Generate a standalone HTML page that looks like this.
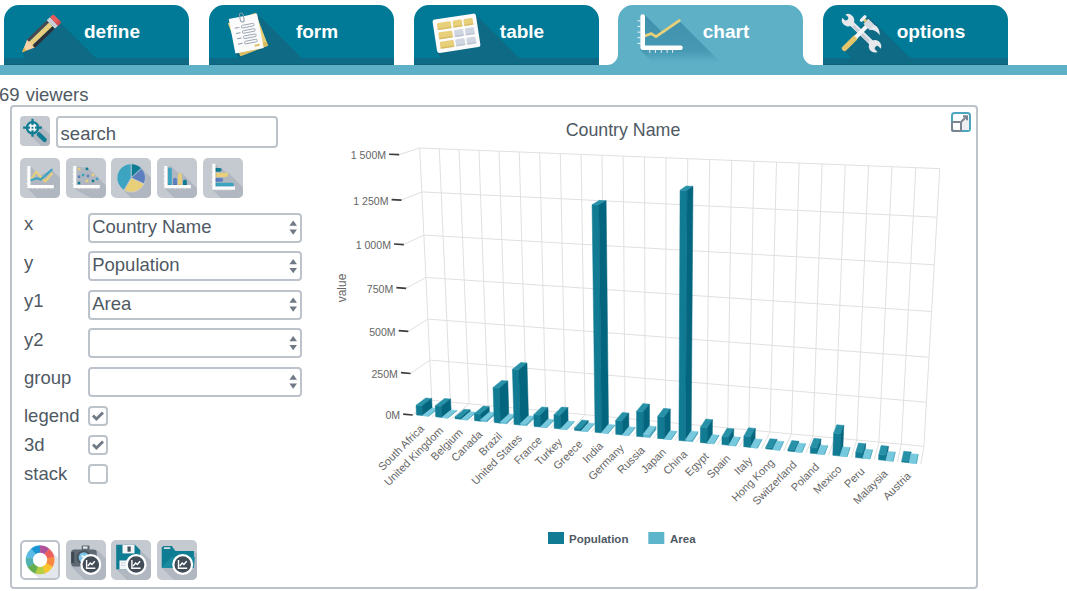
<!DOCTYPE html>
<html><head><meta charset="utf-8">
<style>
*{box-sizing:border-box;margin:0;padding:0}
html,body{width:1067px;height:591px;overflow:hidden;background:#fff;font-family:"Liberation Sans",sans-serif;color:#4f5964}
.abs{position:absolute}
.tab{position:absolute;top:5px;width:185px;height:60px;background:#037893;border-radius:15px 15px 0 0;overflow:hidden}
.tab .band{position:absolute;left:0;right:0;top:53px;height:7px;background:#0e6580}
.tab .lbl{position:absolute;top:13px;left:0;width:216px;text-align:center;color:#fff;font-weight:bold;font-size:18px;line-height:24px}
.tab svg{position:absolute;left:0;top:0}
.tab.active{background:#5fb0c6;overflow:visible}
.bar{position:absolute;left:0;top:65px;width:1067px;height:10px;background:#5fb0c6}
.viewers{position:absolute;left:-1px;top:85px;font-size:18.5px;line-height:20px;word-spacing:1px}
.panel{position:absolute;left:9.5px;top:105px;width:968px;height:483.5px;border:2px solid #bcc3cb;border-radius:4px}
.btn{position:absolute;width:40px;height:40px;border-radius:5px;background:#c5cad1;overflow:hidden}
.btn svg{position:absolute;left:0;top:0}
.inp{position:absolute;border:2px solid #bcc3cb;border-radius:4px;background:#fff;font-size:18.5px;color:#4f5964}
.lab{position:absolute;left:24px;font-size:18.5px;line-height:20px}
.sel{position:absolute;left:88px;width:214px;height:30px;border:2px solid #bcc3cb;border-radius:4px;font-size:18.5px;line-height:23px;padding-left:2.2px}
.sel:after{content:"";position:absolute}
.arr{position:absolute;right:3px;top:6px}
.cb{position:absolute;left:88px;width:20px;height:20px;border:2px solid #bcc3cb;border-radius:4px}
.yl{font-size:10.6px;fill:#666}
.xl{font-size:11px;fill:#666}
</style></head><body>
<svg class="abs" style="left:0;top:0" width="1067" height="80">
<defs>
<linearGradient id="chsh" x1="0" y1="15" x2="0" y2="62" gradientUnits="userSpaceOnUse"><stop offset="0" stop-color="#3e90ac"/><stop offset="0.75" stop-color="#4798b3"/><stop offset="1" stop-color="#5cafc6"/></linearGradient>
<clipPath id="tc0"><path d="M4,65 V20 A15,15 0 0 1 19,5 H174 A15,15 0 0 1 189,20 V65Z"/></clipPath>
<clipPath id="tc1"><path d="M209,65 V20 A15,15 0 0 1 224,5 H379 A15,15 0 0 1 394,20 V65Z"/></clipPath>
<clipPath id="tc2"><path d="M414,65 V20 A15,15 0 0 1 429,5 H584 A15,15 0 0 1 599,20 V65Z"/></clipPath>
<clipPath id="tc3"><path d="M618,65 V20 A15,15 0 0 1 633,5 H788 A15,15 0 0 1 803,20 V65Z"/></clipPath>
<clipPath id="tc4"><path d="M823,65 V20 A15,15 0 0 1 838,5 H993 A15,15 0 0 1 1008,20 V65Z"/></clipPath>
</defs>
<rect x="0" y="65" width="1067" height="10" fill="#5eb0c7"/>
<path d="M4,65 V20 A15,15 0 0 1 19,5 H174 A15,15 0 0 1 189,20 V65Z" fill="#007a96"/>
<rect x="4" y="58" width="185" height="7" fill="#0f6a85"/>
<g clip-path="url(#tc0)"><polygon points="22,52 60.7,22.8 103,65 29,65" fill="#0f6a85"/></g>
<rect x="4" y="64" width="185" height="1" fill="#0d627e"/>
<path d="M209,65 V20 A15,15 0 0 1 224,5 H379 A15,15 0 0 1 394,20 V65Z" fill="#007a96"/>
<rect x="209" y="58" width="185" height="7" fill="#0f6a85"/>
<g clip-path="url(#tc1)"><polygon points="257.1,13.6 308.5,65 246.5,65 235.2,53.7" fill="#0f6a85"/></g>
<rect x="209" y="64" width="185" height="1" fill="#0d627e"/>
<path d="M414,65 V20 A15,15 0 0 1 429,5 H584 A15,15 0 0 1 599,20 V65Z" fill="#007a96"/>
<rect x="414" y="58" width="185" height="7" fill="#0f6a85"/>
<g clip-path="url(#tc2)"><polygon points="475.8,14.5 526.3,65 448.5,65 437.2,53.7" fill="#0f6a85"/></g>
<rect x="414" y="64" width="185" height="1" fill="#0d627e"/>
<path d="M607,65 A11,11 0 0 0 618,54 V20 A15,15 0 0 1 633,5 H788 A15,15 0 0 1 803,20 V54 A11,11 0 0 0 814,65Z" fill="#5eb0c7"/>
<g clip-path="url(#tc3)"><polygon points="645,15 663.5,33.5 679,20.7 723.3,65 655,65 640,50" fill="url(#chsh)"/></g>
<path d="M823,65 V20 A15,15 0 0 1 838,5 H993 A15,15 0 0 1 1008,20 V65Z" fill="#007a96"/>
<rect x="823" y="58" width="185" height="7" fill="#0f6a85"/>
<g clip-path="url(#tc4)"><polygon points="868.5,16.2 917.3,65 858.4,65 843.1,49.7" fill="#0f6a85"/></g>
<rect x="823" y="64" width="185" height="1" fill="#0d627e"/>
<g transform="translate(22.1 52.2) rotate(-44)"><polygon points="0,0 13,-5.8 13,5.8" fill="#f6d3a6"/><polygon points="0,0 4.5,-2 4.5,2" fill="#d9b447"/><rect x="12" y="-5.8" width="28" height="3.2" fill="#474c54"/><rect x="12" y="-2.6" width="28" height="5" fill="#e8cf7d"/><rect x="12" y="2.4" width="28" height="3.4" fill="#2d3137"/><path d="M12,-5.8 Q10,-3 13,-1 Q10,1 13,3 Q10,4.5 12.5,5.8 L12,5.8Z" fill="#f6d3a6"/><rect x="40" y="-5.8" width="4.2" height="11.6" fill="#dfe2e7"/><rect x="41" y="-5.8" width="0.8" height="11.6" fill="#b9bec6"/><rect x="42.6" y="-5.8" width="0.8" height="11.6" fill="#b9bec6"/><path d="M44.2,-5.8 L47,-5.8 Q49,-5.8 49,-3.5 L49,3.5 Q49,5.8 47,5.8 L44.2,5.8Z" fill="#e95a5b"/><rect x="44.2" y="2.6" width="4.8" height="3.2" fill="#cf4b4d" opacity=".7"/></g>
<g transform="translate(248 34.45) rotate(-21)"><rect x="-14.8" y="-17.6" width="29.6" height="35.3" fill="#e8cf7a"/><rect x="-14.8" y="13" width="29.6" height="4.3" fill="#d9bc5f"/></g>
<g transform="translate(246.2 33.5) rotate(-11)"><rect x="-14.4" y="-17.5" width="28.8" height="35" fill="#fbfbfc"/><g fill="none" stroke="#8e98a8" stroke-width="0.8"><rect x="-3.5" y="-8.7" width="13" height="2.6" rx="1.3"/><rect x="-3.5" y="-3.3" width="13" height="2.6" rx="1.3"/><rect x="-3.5" y="2.1" width="13" height="2.6" rx="1.3"/><rect x="-3.5" y="7.5" width="13" height="2.6" rx="1.3"/><path d="M-10,-7.3h4.5M-10,-1.9h4.5M-10,3.5h4.5M-10,8.9h4.5" stroke-width="1"/></g><rect x="6" y="12.5" width="5" height="2.2" fill="#e0c262"/><rect x="-3.2" y="-21" width="3.8" height="9" rx="1.9" fill="none" stroke="#8e98a8" stroke-width="1"/></g>
<g transform="translate(456.5 33.3) rotate(-8.7)"><rect x="-21.9" y="-16.9" width="43.8" height="33.8" rx="2.5" fill="#fbfbfc"/><rect x="-18" y="-13" width="14" height="7" rx="1.4" fill="#e8cf7a"/><rect x="-18" y="-7.4" width="14" height="1.4" fill="#c9ad55" opacity=".6"/><rect x="-2.2" y="-13" width="9.3" height="7" rx="1.4" fill="#e8cf7a"/><rect x="-2.2" y="-7.4" width="9.3" height="1.4" fill="#c9ad55" opacity=".6"/><rect x="8.8" y="-13" width="9.3" height="7" rx="1.4" fill="#e8cf7a"/><rect x="8.8" y="-7.4" width="9.3" height="1.4" fill="#c9ad55" opacity=".6"/><rect x="-18" y="-3.5" width="14" height="7" rx="1.4" fill="#e8cf7a"/><rect x="-18" y="2.0999999999999996" width="14" height="1.4" fill="#c9ad55" opacity=".6"/><rect x="-2.2" y="-3.5" width="9.3" height="7" rx="1.4" fill="#cfd6e1"/><rect x="-2.2" y="2.0999999999999996" width="9.3" height="1.4" fill="#aeb7c5" opacity=".6"/><rect x="8.8" y="-3.5" width="9.3" height="7" rx="1.4" fill="#cfd6e1"/><rect x="8.8" y="2.0999999999999996" width="9.3" height="1.4" fill="#aeb7c5" opacity=".6"/><rect x="-18" y="6" width="14" height="7" rx="1.4" fill="#e8cf7a"/><rect x="-18" y="11.6" width="14" height="1.4" fill="#c9ad55" opacity=".6"/><rect x="-2.2" y="6" width="9.3" height="7" rx="1.4" fill="#cfd6e1"/><rect x="-2.2" y="11.6" width="9.3" height="1.4" fill="#aeb7c5" opacity=".6"/><rect x="8.8" y="6" width="9.3" height="7" rx="1.4" fill="#cfd6e1"/><rect x="8.8" y="11.6" width="9.3" height="1.4" fill="#aeb7c5" opacity=".6"/></g>
<polyline points="643,36.5 651.3,33.6 656,36.6 679.3,20.6" fill="none" stroke="#e8cf7a" stroke-width="2.8" stroke-linejoin="round" stroke-linecap="round"/>
<path d="M642.7,16.5V47.8H680.5" fill="none" stroke="#fff" stroke-width="4.6" stroke-linecap="round" stroke-linejoin="round"/>
<path d="M637.5,20.8h3M637.5,26.4h3M637.5,32.1h3M637.5,37.7h3M637.5,43.4h3M649.8,50v2.8M655.4,50v2.8M661.3,50v2.8M667.1,50v2.8M672.6,50v2.8" stroke="#fff" stroke-width="1" opacity=".9"/>
<g transform="translate(861.5 33.2) rotate(44)"><rect x="-14" y="-2.6" width="28" height="5.2" fill="#e3e6ea"/><rect x="-11" y="-0.6" width="22" height="2.4" rx="1" fill="#c8cdd5"/><path d="M-24.6,-2.3 A6.3,6.3 0 1 1 -24.6,2.3 L-20.5,2.3 Q-18.3,0 -20.5,-2.3Z" fill="#e6e8ec"/><path d="M24.6,-2.3 A6.3,6.3 0 1 0 24.6,2.3 L20.5,2.3 Q18.3,0 20.5,-2.3Z" fill="#e6e8ec"/></g>
<g transform="translate(843 50) rotate(-45)"><rect x="-0.5" y="-2.7" width="20" height="5.4" rx="2.7" fill="#e3c56b"/><rect x="18" y="-2" width="17" height="4" fill="#f5f6f8"/><path d="M33,-4.2 H40 V5 H33Z" fill="#d5dae1"/><rect x="35" y="-7" width="3" height="3" fill="#e3c56b"/><rect x="32.5" y="-9.6" width="8" height="3.2" rx="1.4" fill="#eceef1"/><path d="M40,4.5 Q42,10 36.5,15.5 Q37.5,9 33,4.5Z" fill="#e6e9ed"/></g>
<text x="112" y="37.8" text-anchor="middle" font-size="19" font-weight="bold" fill="#fff">define</text>
<text x="317" y="37.8" text-anchor="middle" font-size="19" font-weight="bold" fill="#fff">form</text>
<text x="522" y="37.8" text-anchor="middle" font-size="19" font-weight="bold" fill="#fff">table</text>
<text x="726" y="37.8" text-anchor="middle" font-size="19" font-weight="bold" fill="#fff">chart</text>
<text x="931" y="37.8" text-anchor="middle" font-size="19" font-weight="bold" fill="#fff">options</text>
</svg>
<div class="viewers">69 viewers</div>
<div class="panel"></div>
<div class="inp" style="left:56px;top:116px;width:222px;height:32px;padding:5px 0 0 2.6px">search</div>
<div class="lab" style="top:214px">x</div>
<div class="lab" style="top:253px">y</div>
<div class="lab" style="top:291px">y1</div>
<div class="lab" style="top:330px">y2</div>
<div class="lab" style="top:368px">group</div>
<div class="lab" style="top:406px">legend</div>
<div class="lab" style="top:435px">3d</div>
<div class="lab" style="top:464px">stack</div>
<div class="sel" style="top:213px">Country Name</div>
<div class="sel" style="top:251px">Population</div>
<div class="sel" style="top:290px">Area</div>
<div class="sel" style="top:328px"></div>
<div class="sel" style="top:367px"></div>
<div class="cb" style="top:406px"></div>
<div class="cb" style="top:435px"></div>
<div class="cb" style="top:464px"></div>
<div class="cb" style="left:20px;top:540px;width:40px;height:40px;border-radius:5px"></div>
<svg class="abs" style="left:0;top:0" width="1067" height="591">
<defs>
<clipPath id="cs"><rect x="20" y="116" width="30" height="30" rx="4"/></clipPath>
<clipPath id="ct0"><rect x="20" y="158" width="40" height="40" rx="5"/></clipPath>
<clipPath id="ct1"><rect x="66" y="158" width="40" height="40" rx="5"/></clipPath>
<clipPath id="ct2"><rect x="111" y="158" width="40" height="40" rx="5"/></clipPath>
<clipPath id="ct3"><rect x="157" y="158" width="40" height="40" rx="5"/></clipPath>
<clipPath id="ct4"><rect x="203" y="158" width="40" height="40" rx="5"/></clipPath>
<clipPath id="cb0"><rect x="20" y="540" width="40" height="40" rx="5"/></clipPath>
<clipPath id="cb1"><rect x="66" y="540" width="40" height="40" rx="5"/></clipPath>
<clipPath id="cb2"><rect x="111" y="540" width="40" height="40" rx="5"/></clipPath>
<clipPath id="cb3"><rect x="157" y="540" width="40" height="40" rx="5"/></clipPath>
<clipPath id="cb0i"><rect x="22" y="542" width="36" height="36" rx="4"/></clipPath>
</defs>
<rect x="20" y="116" width="30" height="30" rx="4" fill="#c5cad1"/>
<g clip-path="url(#cs)"><polygon points="27,132 37,122 60,145 50,155" fill="#b1b7c0"/></g>
<circle cx="32.5" cy="127.7" r="5.6" fill="#f2f3f4" stroke="#0e7c93" stroke-width="2.3"/>
<path d="M23.1,127.7h6.8M35.1,127.7h6.8M32.5,118.7v6.4M32.5,130.3v6.4" stroke="#0e7c93" stroke-width="2.2"/>
<rect x="31.6" y="126.8" width="1.8" height="1.8" fill="#0e7c93"/>
<path d="M38.9,134.4L44.6,139.9" stroke="#0e7c93" stroke-width="4.4" stroke-linecap="round"/>
<rect x="20" y="158" width="40" height="40" rx="5" fill="#c5cad1"/>
<rect x="66" y="158" width="40" height="40" rx="5" fill="#c5cad1"/>
<rect x="111" y="158" width="40" height="40" rx="5" fill="#c5cad1"/>
<rect x="157" y="158" width="40" height="40" rx="5" fill="#c5cad1"/>
<rect x="203" y="158" width="40" height="40" rx="5" fill="#c5cad1"/>
<g clip-path="url(#ct0)"><polygon points="30.6,166.5 39.7,175.6 51.7,169.7 53.5,171.5 83,201 40,201 27.3,188.3" fill="#b1b7c0"/></g>
<polyline points="30.7,180.2 36,171.7 45.2,181.5 52.4,173" fill="none" stroke="#e8cf7a" stroke-width="2.1" stroke-linejoin="round"/>
<polyline points="30.7,180.2 36.7,178.2 40.6,179.6 51.7,169.7" fill="none" stroke="#3ca4c0" stroke-width="2.1" stroke-linejoin="round" stroke-linecap="round"/>
<path d="M28.900000000000002,166.1V186.6H53.8" fill="none" stroke="#fdfdfd" stroke-width="3.1"/><path d="M26.1,170h1M26.1,174.5h1M26.1,179h1M26.1,183.5h1M33,188.4v1M37.5,188.4v1M42,188.4v1M46.5,188.4v1M51,188.4v1" stroke="#fdfdfd" stroke-width=".7" opacity=".75"/>
<g clip-path="url(#ct1)"><polygon points="76.6,166.5 88.2,167.7 112,191.5 100,203 73.2,188.3" fill="#b1b7c0"/></g>
<path d="M88.5,167L112,190.5" stroke="#c0c5cc" stroke-width="0.8" opacity=".0"/>
<path d="M74.8,166.1V186.6H99.8" fill="none" stroke="#fdfdfd" stroke-width="3.1"/><path d="M72.0,170h1M72.0,174.5h1M72.0,179h1M72.0,183.5h1M79,188.4v1M83.5,188.4v1M88,188.4v1M92.5,188.4v1M97,188.4v1" stroke="#fdfdfd" stroke-width=".7" opacity=".75"/>
<rect x="77.85" y="167.85" width="2.5" height="2.5" fill="#e8cf7a"/>
<rect x="85.75" y="167.65" width="2.5" height="2.5" fill="#0e7c93"/>
<rect x="81.85" y="173.75" width="2.5" height="2.5" fill="#3ca4c0"/>
<rect x="77.75" y="175.45" width="2.5" height="2.5" fill="#5b7fbf"/>
<rect x="86.75" y="174.75" width="2.5" height="2.5" fill="#5b7fbf"/>
<rect x="91.75" y="173.75" width="2.5" height="2.5" fill="#e8cf7a"/>
<rect x="85.75" y="179.65" width="2.5" height="2.5" fill="#e8cf7a"/>
<rect x="91.75" y="179.65" width="2.5" height="2.5" fill="#0e7c93"/>
<rect x="95.85" y="177.65" width="2.5" height="2.5" fill="#3ca4c0"/>
<rect x="77.75" y="181.75" width="2.5" height="2.5" fill="#0e7c93"/>
<g clip-path="url(#ct2)"><polygon points="141.14,167.86 175,201.7 155,221.7 121.06,187.94" fill="#b1b7c0"/></g>
<path d="M131.1,177.9L131.10,163.70A14.2,14.2 0 0 1 141.57,168.31Z" fill="#0e7c93" stroke="#c9ced5" stroke-width=".7"/>
<path d="M131.1,177.9L141.57,168.31A14.2,14.2 0 0 1 143.97,183.90Z" fill="#5b7fbf" stroke="#c9ced5" stroke-width=".7"/>
<path d="M131.1,177.9L143.97,183.90A14.2,14.2 0 0 1 124.00,190.20Z" fill="#e8cf7a" stroke="#c9ced5" stroke-width=".7"/>
<path d="M131.1,177.9L124.00,190.20A14.2,14.2 0 0 1 131.10,163.70Z" fill="#3ca4c0" stroke="#c9ced5" stroke-width=".7"/>
<g clip-path="url(#ct3)"><polygon points="167.2,166.5 171.8,166.5 178,172.7 181.9,172.9 215,206 185,208 164.2,188" fill="#b1b7c0"/></g>
<path d="M168,185.5V169.1Q168,167.4 169.90,167.4 Q171.8,167.4 171.8,169.1V185.5Z" fill="#3ca4c0"/>
<rect x="168" y="184.3" width="3.8" height="1.2" fill="#000" opacity=".13"/>
<path d="M173.1,185.5V179.5Q173.1,177.8 175.00,177.8 Q176.9,177.8 176.9,179.5V185.5Z" fill="#5b7fbf"/>
<rect x="173.1" y="184.3" width="3.8" height="1.2" fill="#000" opacity=".13"/>
<path d="M178,185.5V174.6Q178,172.9 179.95,172.9 Q181.9,172.9 181.9,174.6V185.5Z" fill="#e8cf7a"/>
<rect x="178" y="184.3" width="3.9" height="1.2" fill="#000" opacity=".13"/>
<path d="M183,185.5V181.29999999999998Q183,179.6 184.90,179.6 Q186.8,179.6 186.8,181.29999999999998V185.5Z" fill="#0e7c93"/>
<rect x="183" y="184.3" width="3.8" height="1.2" fill="#000" opacity=".13"/>
<path d="M165.79999999999998,166.1V186.6H190.8" fill="none" stroke="#fdfdfd" stroke-width="3.1"/><path d="M163.0,170h1M163.0,174.5h1M163.0,179h1M163.0,183.5h1M170,188.4v1M175,188.4v1M180,188.4v1M185,188.4v1" stroke="#fdfdfd" stroke-width=".7" opacity=".75"/>
<g clip-path="url(#ct4)"><polygon points="215.3,164 219.2,167.9 221.6,167.9 226.5,172.8 228.3,172.8 262,206.5 232,209.5 212.3,189.5" fill="#b1b7c0"/></g>
<path d="M215.3,167.9H219.80Q221.6,167.9 221.6,169.85 Q221.6,171.8 219.80,171.8H215.3Z" fill="#0e7c93"/>
<rect x="215.3" y="167.9" width="1.2" height="3.9" fill="#000" opacity=".13"/>
<path d="M215.3,172.8H226.50Q228.3,172.8 228.3,174.85 Q228.3,176.9 226.50,176.9H215.3Z" fill="#e8cf7a"/>
<rect x="215.3" y="172.8" width="1.2" height="4.1" fill="#000" opacity=".13"/>
<path d="M215.3,178H221.30Q223.1,178 223.1,179.85 Q223.1,181.7 221.30,181.7H215.3Z" fill="#5b7fbf"/>
<rect x="215.3" y="178" width="1.2" height="3.7" fill="#000" opacity=".13"/>
<path d="M215.3,182.8H232.10Q233.9,182.8 233.9,184.75 Q233.9,186.7 232.10,186.7H215.3Z" fill="#3ca4c0"/>
<rect x="215.3" y="182.8" width="1.2" height="3.9" fill="#000" opacity=".13"/>
<path d="M213.9,163.8V188.1H235" fill="none" stroke="#fdfdfd" stroke-width="3.1"/><path d="M211.10000000000002,169.4h1M211.10000000000002,174.3h1M211.10000000000002,179.5h1M211.10000000000002,184.3h1M216.8,189.9v1M220.1,189.9v1M223.8,189.9v1M227.2,189.9v1M230.6,189.9v1" stroke="#fdfdfd" stroke-width=".7" opacity=".75"/>
<path d="M289.4,225.8L293.2,220.6L297,225.8ZM289.4,229.5L293.2,234.7L297,229.5Z" fill="#6f7a86"/>
<path d="M289.4,264.3L293.2,259.1L297,264.3ZM289.4,268.0L293.2,273.2L297,268.0Z" fill="#6f7a86"/>
<path d="M289.4,302.8L293.2,297.6L297,302.8ZM289.4,306.5L293.2,311.7L297,306.5Z" fill="#6f7a86"/>
<path d="M289.4,341.3L293.2,336.1L297,341.3ZM289.4,345.0L293.2,350.2L297,345.0Z" fill="#6f7a86"/>
<path d="M289.4,379.8L293.2,374.6L297,379.8ZM289.4,383.5L293.2,388.7L297,383.5Z" fill="#6f7a86"/>
<path d="M93,415.6L96.4,419L103,412.4" fill="none" stroke="#6f7a86" stroke-width="2.8"/>
<path d="M93,444.6L96.4,448L103,441.4" fill="none" stroke="#6f7a86" stroke-width="2.8"/>
<g clip-path="url(#cb0i)"><polygon points="50.1,549.8 90,589.7 70,609.7 30.1,569.8" fill="#e3e6ea"/></g>
<path d="M30.97,548.92A14.2,14.2 0 0 1 40.10,545.60L40.10,552.70A7.1,7.1 0 0 0 35.54,554.36Z" fill="#1a96d4" stroke="#1a96d4" stroke-width=".4"/>
<path d="M40.10,545.60A14.2,14.2 0 0 1 49.23,548.92L44.66,554.36A7.1,7.1 0 0 0 40.10,552.70Z" fill="#b1519c" stroke="#b1519c" stroke-width=".4"/>
<path d="M49.23,548.92A14.2,14.2 0 0 1 54.08,557.33L47.09,558.57A7.1,7.1 0 0 0 44.66,554.36Z" fill="#ee5f5c" stroke="#ee5f5c" stroke-width=".4"/>
<path d="M54.08,557.33A14.2,14.2 0 0 1 52.40,566.90L46.25,563.35A7.1,7.1 0 0 0 47.09,558.57Z" fill="#f7883e" stroke="#f7883e" stroke-width=".4"/>
<path d="M52.40,566.90A14.2,14.2 0 0 1 44.96,573.14L42.53,566.47A7.1,7.1 0 0 0 46.25,563.35Z" fill="#fcc52d" stroke="#fcc52d" stroke-width=".4"/>
<path d="M44.96,573.14A14.2,14.2 0 0 1 35.24,573.14L37.67,566.47A7.1,7.1 0 0 0 42.53,566.47Z" fill="#b6cf43" stroke="#b6cf43" stroke-width=".4"/>
<path d="M35.24,573.14A14.2,14.2 0 0 1 27.80,566.90L33.95,563.35A7.1,7.1 0 0 0 37.67,566.47Z" fill="#63ae4d" stroke="#63ae4d" stroke-width=".4"/>
<path d="M27.80,566.90A14.2,14.2 0 0 1 26.12,557.33L33.11,558.57A7.1,7.1 0 0 0 33.95,563.35Z" fill="#4fb1b0" stroke="#4fb1b0" stroke-width=".4"/>
<path d="M26.12,557.33A14.2,14.2 0 0 1 30.97,548.92L35.54,554.36A7.1,7.1 0 0 0 33.11,558.57Z" fill="#5bbbe5" stroke="#5bbbe5" stroke-width=".4"/>
<circle cx="40.1" cy="559.8" r="7.1" fill="#fff"/>
<rect x="66" y="540" width="40" height="40" rx="5" fill="#c5cad1"/>
<g clip-path="url(#cb1)"><polygon points="96.7,549.4 136.7,589.4 111.2,606.5 71.2,566.5" fill="#b1b7c0"/></g>
<rect x="111" y="540" width="40" height="40" rx="5" fill="#c5cad1"/>
<g clip-path="url(#cb2)"><polygon points="140.2,550 180.2,590 156.2,609.2 116.2,569.2" fill="#b1b7c0"/></g>
<rect x="157" y="540" width="40" height="40" rx="5" fill="#c5cad1"/>
<g clip-path="url(#cb3)"><polygon points="193.9,551 233.9,591 201.7,607.8 161.7,567.8" fill="#b1b7c0"/></g>
<rect x="71.2" y="549.4" width="25.5" height="17" rx="3" fill="#5d6873"/>
<rect x="81.7" y="545.5" width="7.8" height="5" rx="1" fill="#5d6873"/>
<rect x="83" y="546.5" width="4.5" height="2.2" fill="#e8eaed"/>
<rect x="71.2" y="552" width="3" height="11" fill="#3f4953"/>
<circle cx="83.8" cy="557.5" r="7" fill="#46515b"/>
<circle cx="83.8" cy="557.5" r="5.2" fill="#7cc3e6"/>
<circle cx="82.6" cy="556.3" r="1.3" fill="#d8eef8"/>
<path d="M116.2,544.8H135L140.2,550V569.2H116.2Z" fill="#0e7c93"/>
<rect x="122.5" y="544.8" width="12" height="8.6" fill="#f4f5f6"/>
<rect x="127.5" y="546.5" width="3.2" height="5.2" fill="#46515b"/>
<rect x="119.5" y="560.5" width="17" height="8.7" fill="#f4f5f6"/>
<path d="M121,563h6M121,565.5h6" stroke="#c9ced5" stroke-width=".8"/>
<path d="M161.7,547V567.8H193.9V551H175.5L173,547.8Z" fill="#0e7c93"/>
<rect x="162.6" y="546" width="10" height="3" rx="1" fill="#0e7c93"/>
<rect x="163.8" y="547.3" width="6.5" height="1.6" fill="#e8eaed"/>
<path d="M161.7,567.8L171,557H195L193.9,567.8Z" fill="#1a8aa0"/>
<circle cx="90.8" cy="564.5" r="9.4" fill="#414c57" stroke="#fff" stroke-width="2.2"/>
<path d="M86.6,560.0V568.3H95.3" fill="none" stroke="#fff" stroke-width="1.4"/>
<polyline points="87.8,566.0 90.3,563.0 92.0,564.5 94.8,561.3" fill="none" stroke="#fff" stroke-width="1.4"/>
<circle cx="136.1" cy="564.5" r="9.4" fill="#414c57" stroke="#fff" stroke-width="2.2"/>
<path d="M131.9,560.0V568.3H140.6" fill="none" stroke="#fff" stroke-width="1.4"/>
<polyline points="133.1,566.0 135.6,563.0 137.29999999999998,564.5 140.1,561.3" fill="none" stroke="#fff" stroke-width="1.4"/>
<circle cx="182.7" cy="564.5" r="9.4" fill="#414c57" stroke="#fff" stroke-width="2.2"/>
<path d="M178.5,560.0V568.3H187.2" fill="none" stroke="#fff" stroke-width="1.4"/>
<polyline points="179.7,566.0 182.2,563.0 183.89999999999998,564.5 186.7,561.3" fill="none" stroke="#fff" stroke-width="1.4"/>
<rect x="952" y="113" width="18" height="18" rx="2.5" fill="#fff" stroke="#4ca6bf" stroke-width="2"/>
<polygon points="961,122 966.5,116.5 969,117 969,130 961,130" fill="#eceeef"/>
<rect x="952" y="122" width="9" height="9" rx="1" fill="none" stroke="#7a8591" stroke-width="2"/>
<path d="M961,122L966.5,116.5M963,116.3H967V120.3" fill="none" stroke="#7a8591" stroke-width="2"/>
</svg>
<svg class="abs" style="left:0;top:0" width="1067" height="591">
<text x="623" y="135.5" text-anchor="middle" font-size="17.8" fill="#4f5964">Country Name</text>
<text x="0" y="0" transform="translate(345.5 288) rotate(-90)" text-anchor="middle" font-size="12" fill="#666">value</text>
<path d="M412.71,414.98L431.78,400.31L923.9,446.3" stroke="#e0e0e0" stroke-width="1" fill="none"/>
<path d="M410.55,373.51L429.86,360.06L926.42,402.21" stroke="#e0e0e0" stroke-width="1" fill="none"/>
<path d="M408.35,331.31L427.9,319.12L928.99,357.28" stroke="#e0e0e0" stroke-width="1" fill="none"/>
<path d="M406.11,288.34L425.9,277.46L931.61,311.49" stroke="#e0e0e0" stroke-width="1" fill="none"/>
<path d="M403.83,244.59L423.87,235.07L934.28,264.8" stroke="#e0e0e0" stroke-width="1" fill="none"/>
<path d="M401.51,200.05L421.8,191.93L937,217.2" stroke="#e0e0e0" stroke-width="1" fill="none"/>
<path d="M399.15,154.68L419.7,148.02L939.78,168.65" stroke="#e0e0e0" stroke-width="1" fill="none"/>
<path d="M419.7,148.02L431.78,400.31L412.71,414.98" stroke="#e0e0e0" stroke-width="1" fill="none"/>
<path d="M439.28,148.79L450.41,402.05L431.88,416.84" stroke="#e0e0e0" stroke-width="1" fill="none"/>
<path d="M459.03,149.58L469.19,403.81L451.21,418.71" stroke="#e0e0e0" stroke-width="1" fill="none"/>
<path d="M478.94,150.37L488.12,405.58L470.7,420.6" stroke="#e0e0e0" stroke-width="1" fill="none"/>
<path d="M499.02,151.16L507.2,407.36L490.35,422.51" stroke="#e0e0e0" stroke-width="1" fill="none"/>
<path d="M519.28,151.97L526.43,409.16L510.16,424.43" stroke="#e0e0e0" stroke-width="1" fill="none"/>
<path d="M539.7,152.78L545.83,410.97L530.14,426.37" stroke="#e0e0e0" stroke-width="1" fill="none"/>
<path d="M560.3,153.6L565.38,412.8L550.29,428.32" stroke="#e0e0e0" stroke-width="1" fill="none"/>
<path d="M581.08,154.42L585.08,414.64L570.61,430.29" stroke="#e0e0e0" stroke-width="1" fill="none"/>
<path d="M602.04,155.25L604.96,416.49L591.11,432.28" stroke="#e0e0e0" stroke-width="1" fill="none"/>
<path d="M623.19,156.09L624.99,418.37L611.77,434.28" stroke="#e0e0e0" stroke-width="1" fill="none"/>
<path d="M644.51,156.94L645.19,420.25L632.62,436.3" stroke="#e0e0e0" stroke-width="1" fill="none"/>
<path d="M666.03,157.79L665.56,422.16L653.64,438.34" stroke="#e0e0e0" stroke-width="1" fill="none"/>
<path d="M687.73,158.65L686.1,424.08L674.85,440.4" stroke="#e0e0e0" stroke-width="1" fill="none"/>
<path d="M709.63,159.52L706.81,426.01L696.24,442.47" stroke="#e0e0e0" stroke-width="1" fill="none"/>
<path d="M731.72,160.4L727.7,427.96L717.81,444.56" stroke="#e0e0e0" stroke-width="1" fill="none"/>
<path d="M754.01,161.28L748.76,429.93L739.58,446.68" stroke="#e0e0e0" stroke-width="1" fill="none"/>
<path d="M776.5,162.17L770,431.92L761.54,448.8" stroke="#e0e0e0" stroke-width="1" fill="none"/>
<path d="M799.2,163.07L791.42,433.92L783.69,450.95" stroke="#e0e0e0" stroke-width="1" fill="none"/>
<path d="M822.1,163.98L813.03,435.94L806.04,453.12" stroke="#e0e0e0" stroke-width="1" fill="none"/>
<path d="M845.2,164.9L834.82,437.97L828.58,455.31" stroke="#e0e0e0" stroke-width="1" fill="none"/>
<path d="M868.52,165.83L856.8,440.03L851.33,457.51" stroke="#e0e0e0" stroke-width="1" fill="none"/>
<path d="M892.06,166.76L878.97,442.1L874.29,459.74" stroke="#e0e0e0" stroke-width="1" fill="none"/>
<path d="M915.81,167.7L901.34,444.19L897.45,461.98" stroke="#e0e0e0" stroke-width="1" fill="none"/>
<path d="M939.78,168.65L923.9,446.3L920.82,464.25" stroke="#e0e0e0" stroke-width="1" fill="none"/>
<path d="M403.18,414.05L412.71,414.98" stroke="#3c3c3c" stroke-width="1.7" fill="none"/>
<text x="400.18" y="419.05" text-anchor="end" class="yl">0M</text>
<path d="M400.94,372.66L410.55,373.51" stroke="#3c3c3c" stroke-width="1.7" fill="none"/>
<text x="397.94" y="377.66" text-anchor="end" class="yl">250M</text>
<path d="M398.66,330.54L408.35,331.31" stroke="#3c3c3c" stroke-width="1.7" fill="none"/>
<text x="395.66" y="335.54" text-anchor="end" class="yl">500M</text>
<path d="M396.34,287.66L406.11,288.34" stroke="#3c3c3c" stroke-width="1.7" fill="none"/>
<text x="393.34" y="292.66" text-anchor="end" class="yl">750M</text>
<path d="M393.98,244L403.83,244.59" stroke="#3c3c3c" stroke-width="1.7" fill="none"/>
<text x="390.98" y="249" text-anchor="end" class="yl">1 000M</text>
<path d="M391.57,199.54L401.51,200.05" stroke="#3c3c3c" stroke-width="1.7" fill="none"/>
<text x="388.57" y="204.54" text-anchor="end" class="yl">1 250M</text>
<path d="M389.12,154.26L399.15,154.68" stroke="#3c3c3c" stroke-width="1.7" fill="none"/>
<text x="386.12" y="159.26" text-anchor="end" class="yl">1 500M</text>
<path d="M416.54,415.01L422.57,415.59L422.08,405.86L416.04,405.29Z" fill="#117b93" stroke="#117b93" stroke-width="0.5" stroke-linejoin="round"/>
<path d="M416.04,405.29L422.08,405.86L431.65,398.53L425.7,397.98Z" fill="#2791a8" stroke="#2791a8" stroke-width="0.5" stroke-linejoin="round"/>
<path d="M422.57,415.59L432.11,408.12L431.65,398.53L422.08,405.86Z" fill="#04657f" stroke="#04657f" stroke-width="0.5" stroke-linejoin="round"/>
<path d="M422.57,415.59L428.61,416.18L428.6,415.98L422.56,415.39Z" fill="#5db7cf" stroke="#5db7cf" stroke-width="0.5" stroke-linejoin="round"/>
<path d="M422.56,415.39L428.6,415.98L438.06,408.49L432.1,407.92Z" fill="#77c9de" stroke="#77c9de" stroke-width="0.5" stroke-linejoin="round"/>
<path d="M428.61,416.18L438.07,408.69L438.06,408.49L428.6,415.98Z" fill="#4aa3bb" stroke="#4aa3bb" stroke-width="0.5" stroke-linejoin="round"/>
<path d="M435.73,416.87L441.8,417.46L441.3,406.36L435.2,405.78Z" fill="#117b93" stroke="#117b93" stroke-width="0.5" stroke-linejoin="round"/>
<path d="M435.2,405.78L441.3,406.36L450.59,398.99L444.59,398.43Z" fill="#2791a8" stroke="#2791a8" stroke-width="0.5" stroke-linejoin="round"/>
<path d="M441.8,417.46L451.07,409.92L450.59,398.99L441.3,406.36Z" fill="#04657f" stroke="#04657f" stroke-width="0.5" stroke-linejoin="round"/>
<path d="M441.8,417.46L447.9,418.05L447.9,418.01L441.8,417.42Z" fill="#5db7cf" stroke="#5db7cf" stroke-width="0.5" stroke-linejoin="round"/>
<path d="M441.8,417.42L447.9,418.01L457.08,410.46L451.07,409.88Z" fill="#77c9de" stroke="#77c9de" stroke-width="0.5" stroke-linejoin="round"/>
<path d="M447.9,418.05L457.08,410.49L457.08,410.46L447.9,418.01Z" fill="#4aa3bb" stroke="#4aa3bb" stroke-width="0.5" stroke-linejoin="round"/>
<path d="M455.07,418.74L461.2,419.34L461.12,417.34L454.99,416.75Z" fill="#117b93" stroke="#117b93" stroke-width="0.5" stroke-linejoin="round"/>
<path d="M454.99,416.75L461.12,417.34L470.11,409.78L464.07,409.21Z" fill="#2791a8" stroke="#2791a8" stroke-width="0.5" stroke-linejoin="round"/>
<path d="M461.2,419.34L470.19,411.74L470.11,409.78L461.12,417.34Z" fill="#04657f" stroke="#04657f" stroke-width="0.5" stroke-linejoin="round"/>
<path d="M461.2,419.34L467.34,419.93L467.34,419.93L461.2,419.33Z" fill="#5db7cf" stroke="#5db7cf" stroke-width="0.5" stroke-linejoin="round"/>
<path d="M461.2,419.33L467.34,419.93L476.24,412.31L470.19,411.74Z" fill="#77c9de" stroke="#77c9de" stroke-width="0.5" stroke-linejoin="round"/>
<path d="M467.34,419.93L476.24,412.32L476.24,412.31L467.34,419.93Z" fill="#4aa3bb" stroke="#4aa3bb" stroke-width="0.5" stroke-linejoin="round"/>
<path d="M474.58,420.63L480.76,421.23L480.49,414.23L474.31,413.64Z" fill="#117b93" stroke="#117b93" stroke-width="0.5" stroke-linejoin="round"/>
<path d="M474.31,413.64L480.49,414.23L489.21,406.68L483.12,406.11Z" fill="#2791a8" stroke="#2791a8" stroke-width="0.5" stroke-linejoin="round"/>
<path d="M480.76,421.23L489.46,413.57L489.21,406.68L480.49,414.23Z" fill="#04657f" stroke="#04657f" stroke-width="0.5" stroke-linejoin="round"/>
<path d="M480.76,421.23L486.95,421.83L486.89,420.17L480.7,419.57Z" fill="#5db7cf" stroke="#5db7cf" stroke-width="0.5" stroke-linejoin="round"/>
<path d="M480.7,419.57L486.89,420.17L495.5,412.52L489.4,411.94Z" fill="#77c9de" stroke="#77c9de" stroke-width="0.5" stroke-linejoin="round"/>
<path d="M486.95,421.83L495.56,414.15L495.5,412.52L486.89,420.17Z" fill="#4aa3bb" stroke="#4aa3bb" stroke-width="0.5" stroke-linejoin="round"/>
<path d="M494.25,422.54L500.48,423.14L499.31,388.13L493.03,387.56Z" fill="#117b93" stroke="#117b93" stroke-width="0.5" stroke-linejoin="round"/>
<path d="M493.03,387.56L499.31,388.13L507.8,380.93L501.62,380.39Z" fill="#2791a8" stroke="#2791a8" stroke-width="0.5" stroke-linejoin="round"/>
<path d="M500.48,423.14L508.89,415.42L507.8,380.93L499.31,388.13Z" fill="#04657f" stroke="#04657f" stroke-width="0.5" stroke-linejoin="round"/>
<path d="M500.48,423.14L506.72,423.75L506.68,422.32L500.43,421.72Z" fill="#5db7cf" stroke="#5db7cf" stroke-width="0.5" stroke-linejoin="round"/>
<path d="M500.43,421.72L506.68,422.32L515,414.6L508.84,414.02Z" fill="#77c9de" stroke="#77c9de" stroke-width="0.5" stroke-linejoin="round"/>
<path d="M506.72,423.75L515.04,416.01L515,414.6L506.68,422.32Z" fill="#4aa3bb" stroke="#4aa3bb" stroke-width="0.5" stroke-linejoin="round"/>
<path d="M514.08,424.46L520.36,425.07L518.75,369.92L512.4,369.37Z" fill="#117b93" stroke="#117b93" stroke-width="0.5" stroke-linejoin="round"/>
<path d="M512.4,369.37L518.75,369.92L526.98,362.97L520.73,362.45Z" fill="#2791a8" stroke="#2791a8" stroke-width="0.5" stroke-linejoin="round"/>
<path d="M520.36,425.07L528.48,417.28L526.98,362.97L518.75,369.92Z" fill="#04657f" stroke="#04657f" stroke-width="0.5" stroke-linejoin="round"/>
<path d="M520.36,425.07L526.66,425.68L526.61,424.03L520.31,423.42Z" fill="#5db7cf" stroke="#5db7cf" stroke-width="0.5" stroke-linejoin="round"/>
<path d="M520.31,423.42L526.61,424.03L534.64,416.25L528.43,415.66Z" fill="#77c9de" stroke="#77c9de" stroke-width="0.5" stroke-linejoin="round"/>
<path d="M526.66,425.68L534.68,417.87L534.64,416.25L526.61,424.03Z" fill="#4aa3bb" stroke="#4aa3bb" stroke-width="0.5" stroke-linejoin="round"/>
<path d="M534.08,426.4L540.41,427.01L540.12,415.2L533.77,414.6Z" fill="#117b93" stroke="#117b93" stroke-width="0.5" stroke-linejoin="round"/>
<path d="M533.77,414.6L540.12,415.2L547.96,407.53L541.7,406.95Z" fill="#2791a8" stroke="#2791a8" stroke-width="0.5" stroke-linejoin="round"/>
<path d="M540.41,427.01L548.23,419.16L547.96,407.53L540.12,415.2Z" fill="#04657f" stroke="#04657f" stroke-width="0.5" stroke-linejoin="round"/>
<path d="M540.41,427.01L546.77,427.63L546.76,427.52L540.41,426.9Z" fill="#5db7cf" stroke="#5db7cf" stroke-width="0.5" stroke-linejoin="round"/>
<path d="M540.41,426.9L546.76,427.52L554.48,419.65L548.22,419.06Z" fill="#77c9de" stroke="#77c9de" stroke-width="0.5" stroke-linejoin="round"/>
<path d="M546.77,427.63L554.48,419.76L554.48,419.65L546.76,427.52Z" fill="#4aa3bb" stroke="#4aa3bb" stroke-width="0.5" stroke-linejoin="round"/>
<path d="M554.25,428.35L560.64,428.97L560.35,415.24L553.95,414.64Z" fill="#117b93" stroke="#117b93" stroke-width="0.5" stroke-linejoin="round"/>
<path d="M553.95,414.64L560.35,415.24L567.88,407.54L561.57,406.95Z" fill="#2791a8" stroke="#2791a8" stroke-width="0.5" stroke-linejoin="round"/>
<path d="M560.64,428.97L568.14,421.06L567.88,407.54L560.35,415.24Z" fill="#04657f" stroke="#04657f" stroke-width="0.5" stroke-linejoin="round"/>
<path d="M560.64,428.97L567.04,429.59L567.04,429.46L560.63,428.84Z" fill="#5db7cf" stroke="#5db7cf" stroke-width="0.5" stroke-linejoin="round"/>
<path d="M560.63,428.84L567.04,429.46L574.44,421.53L568.14,420.93Z" fill="#77c9de" stroke="#77c9de" stroke-width="0.5" stroke-linejoin="round"/>
<path d="M567.04,429.59L574.45,421.66L574.44,421.53L567.04,429.46Z" fill="#4aa3bb" stroke="#4aa3bb" stroke-width="0.5" stroke-linejoin="round"/>
<path d="M574.59,430.32L581.03,430.95L580.99,428.57L574.54,427.95Z" fill="#117b93" stroke="#117b93" stroke-width="0.5" stroke-linejoin="round"/>
<path d="M574.54,427.95L580.99,428.57L588.19,420.63L581.84,420.03Z" fill="#2791a8" stroke="#2791a8" stroke-width="0.5" stroke-linejoin="round"/>
<path d="M581.03,430.95L588.22,422.97L588.19,420.63L580.99,428.57Z" fill="#04657f" stroke="#04657f" stroke-width="0.5" stroke-linejoin="round"/>
<path d="M581.03,430.95L587.49,431.57L587.49,431.55L581.03,430.92Z" fill="#5db7cf" stroke="#5db7cf" stroke-width="0.5" stroke-linejoin="round"/>
<path d="M581.03,430.92L587.49,431.55L594.58,423.55L588.22,422.95Z" fill="#77c9de" stroke="#77c9de" stroke-width="0.5" stroke-linejoin="round"/>
<path d="M587.49,431.57L594.58,423.57L594.58,423.55L587.49,431.55Z" fill="#4aa3bb" stroke="#4aa3bb" stroke-width="0.5" stroke-linejoin="round"/>
<path d="M595.1,432.31L601.59,432.94L598.88,205.06L592.07,204.72Z" fill="#117b93" stroke="#117b93" stroke-width="0.5" stroke-linejoin="round"/>
<path d="M592.07,204.72L598.88,205.06L606.13,200.67L599.43,200.34Z" fill="#2791a8" stroke="#2791a8" stroke-width="0.5" stroke-linejoin="round"/>
<path d="M601.59,432.94L608.47,424.89L606.13,200.67L598.88,205.06Z" fill="#04657f" stroke="#04657f" stroke-width="0.5" stroke-linejoin="round"/>
<path d="M601.59,432.94L608.11,433.57L608.1,433.01L601.59,432.38Z" fill="#5db7cf" stroke="#5db7cf" stroke-width="0.5" stroke-linejoin="round"/>
<path d="M601.59,432.38L608.1,433.01L614.88,424.95L608.46,424.34Z" fill="#77c9de" stroke="#77c9de" stroke-width="0.5" stroke-linejoin="round"/>
<path d="M608.11,433.57L614.88,425.5L614.88,424.95L608.1,433.01Z" fill="#4aa3bb" stroke="#4aa3bb" stroke-width="0.5" stroke-linejoin="round"/>
<path d="M615.78,434.31L622.34,434.95L622.23,420.98L615.66,420.36Z" fill="#117b93" stroke="#117b93" stroke-width="0.5" stroke-linejoin="round"/>
<path d="M615.66,420.36L622.23,420.98L628.8,413.08L622.33,412.48Z" fill="#2791a8" stroke="#2791a8" stroke-width="0.5" stroke-linejoin="round"/>
<path d="M622.34,434.95L628.89,426.83L628.8,413.08L622.23,420.98Z" fill="#04657f" stroke="#04657f" stroke-width="0.5" stroke-linejoin="round"/>
<path d="M622.34,434.95L628.91,435.59L628.91,435.53L622.34,434.89Z" fill="#5db7cf" stroke="#5db7cf" stroke-width="0.5" stroke-linejoin="round"/>
<path d="M622.34,434.89L628.91,435.53L635.35,427.39L628.89,426.77Z" fill="#77c9de" stroke="#77c9de" stroke-width="0.5" stroke-linejoin="round"/>
<path d="M628.91,435.59L635.35,427.45L635.35,427.39L628.91,435.53Z" fill="#4aa3bb" stroke="#4aa3bb" stroke-width="0.5" stroke-linejoin="round"/>
<path d="M636.65,436.34L643.26,436.98L643.18,411.96L636.54,411.35Z" fill="#117b93" stroke="#117b93" stroke-width="0.5" stroke-linejoin="round"/>
<path d="M636.54,411.35L643.18,411.96L649.44,404.16L642.9,403.57Z" fill="#2791a8" stroke="#2791a8" stroke-width="0.5" stroke-linejoin="round"/>
<path d="M643.26,436.98L649.48,428.79L649.44,404.16L643.18,411.96Z" fill="#04657f" stroke="#04657f" stroke-width="0.5" stroke-linejoin="round"/>
<path d="M643.26,436.98L649.88,437.62L649.88,434.68L643.25,434.04Z" fill="#5db7cf" stroke="#5db7cf" stroke-width="0.5" stroke-linejoin="round"/>
<path d="M643.25,434.04L649.88,434.68L656,426.52L649.47,425.9Z" fill="#77c9de" stroke="#77c9de" stroke-width="0.5" stroke-linejoin="round"/>
<path d="M649.88,437.62L656,429.41L656,426.52L649.88,434.68Z" fill="#4aa3bb" stroke="#4aa3bb" stroke-width="0.5" stroke-linejoin="round"/>
<path d="M657.69,438.38L664.36,439.02L664.39,416.87L657.69,416.25Z" fill="#117b93" stroke="#117b93" stroke-width="0.5" stroke-linejoin="round"/>
<path d="M657.69,416.25L664.39,416.87L670.3,408.96L663.71,408.36Z" fill="#2791a8" stroke="#2791a8" stroke-width="0.5" stroke-linejoin="round"/>
<path d="M664.36,439.02L670.24,430.77L670.3,408.96L664.39,416.87Z" fill="#04657f" stroke="#04657f" stroke-width="0.5" stroke-linejoin="round"/>
<path d="M664.36,439.02L671.04,439.67L671.04,439.6L664.36,438.96Z" fill="#5db7cf" stroke="#5db7cf" stroke-width="0.5" stroke-linejoin="round"/>
<path d="M664.36,438.96L671.04,439.6L676.82,431.33L670.24,430.7Z" fill="#77c9de" stroke="#77c9de" stroke-width="0.5" stroke-linejoin="round"/>
<path d="M671.04,439.67L676.82,431.39L676.82,431.33L671.04,439.6Z" fill="#4aa3bb" stroke="#4aa3bb" stroke-width="0.5" stroke-linejoin="round"/>
<path d="M678.91,440.43L685.64,441.08L687.16,190.53L680.08,190.2Z" fill="#117b93" stroke="#117b93" stroke-width="0.5" stroke-linejoin="round"/>
<path d="M680.08,190.2L687.16,190.53L692.97,186.3L686.01,185.99Z" fill="#2791a8" stroke="#2791a8" stroke-width="0.5" stroke-linejoin="round"/>
<path d="M685.64,441.08L691.18,432.76L692.97,186.3L687.16,190.53Z" fill="#04657f" stroke="#04657f" stroke-width="0.5" stroke-linejoin="round"/>
<path d="M685.64,441.08L692.38,441.74L692.39,440.07L685.65,439.42Z" fill="#5db7cf" stroke="#5db7cf" stroke-width="0.5" stroke-linejoin="round"/>
<path d="M685.65,439.42L692.39,440.07L697.83,431.75L691.2,431.12Z" fill="#77c9de" stroke="#77c9de" stroke-width="0.5" stroke-linejoin="round"/>
<path d="M692.38,441.74L697.82,433.39L697.83,431.75L692.39,440.07Z" fill="#4aa3bb" stroke="#4aa3bb" stroke-width="0.5" stroke-linejoin="round"/>
<path d="M700.32,442.51L707.11,443.16L707.27,427.84L700.47,427.2Z" fill="#117b93" stroke="#117b93" stroke-width="0.5" stroke-linejoin="round"/>
<path d="M700.47,427.2L707.27,427.84L712.48,419.68L705.79,419.06Z" fill="#2791a8" stroke="#2791a8" stroke-width="0.5" stroke-linejoin="round"/>
<path d="M707.11,443.16L712.3,434.77L712.48,419.68L707.27,427.84Z" fill="#04657f" stroke="#04657f" stroke-width="0.5" stroke-linejoin="round"/>
<path d="M707.11,443.16L713.91,443.82L713.91,443.65L707.11,442.99Z" fill="#5db7cf" stroke="#5db7cf" stroke-width="0.5" stroke-linejoin="round"/>
<path d="M707.11,442.99L713.91,443.65L719,435.23L712.31,434.6Z" fill="#77c9de" stroke="#77c9de" stroke-width="0.5" stroke-linejoin="round"/>
<path d="M713.91,443.82L718.99,435.4L719,435.23L713.91,443.65Z" fill="#4aa3bb" stroke="#4aa3bb" stroke-width="0.5" stroke-linejoin="round"/>
<path d="M721.92,444.6L728.76,445.26L728.89,437.23L722.03,436.58Z" fill="#117b93" stroke="#117b93" stroke-width="0.5" stroke-linejoin="round"/>
<path d="M722.03,436.58L728.89,437.23L733.74,428.89L726.99,428.26Z" fill="#2791a8" stroke="#2791a8" stroke-width="0.5" stroke-linejoin="round"/>
<path d="M728.76,445.26L733.61,436.79L733.74,428.89L728.89,437.23Z" fill="#04657f" stroke="#04657f" stroke-width="0.5" stroke-linejoin="round"/>
<path d="M728.76,445.26L735.62,445.93L735.62,445.84L728.76,445.17Z" fill="#5db7cf" stroke="#5db7cf" stroke-width="0.5" stroke-linejoin="round"/>
<path d="M728.76,445.17L735.62,445.84L740.36,437.35L733.61,436.71Z" fill="#77c9de" stroke="#77c9de" stroke-width="0.5" stroke-linejoin="round"/>
<path d="M735.62,445.93L740.35,437.44L740.36,437.35L735.62,445.84Z" fill="#4aa3bb" stroke="#4aa3bb" stroke-width="0.5" stroke-linejoin="round"/>
<path d="M743.71,446.71L750.61,447.38L750.82,436.77L743.9,436.11Z" fill="#117b93" stroke="#117b93" stroke-width="0.5" stroke-linejoin="round"/>
<path d="M743.9,436.11L750.82,436.77L755.31,428.39L748.51,427.76Z" fill="#2791a8" stroke="#2791a8" stroke-width="0.5" stroke-linejoin="round"/>
<path d="M750.61,447.38L755.09,438.84L755.31,428.39L750.82,436.77Z" fill="#04657f" stroke="#04657f" stroke-width="0.5" stroke-linejoin="round"/>
<path d="M750.61,447.38L757.53,448.05L757.53,448L750.61,447.33Z" fill="#5db7cf" stroke="#5db7cf" stroke-width="0.5" stroke-linejoin="round"/>
<path d="M750.61,447.33L757.53,448L761.9,439.43L755.09,438.79Z" fill="#77c9de" stroke="#77c9de" stroke-width="0.5" stroke-linejoin="round"/>
<path d="M757.53,448.05L761.9,439.48L761.9,439.43L757.53,448Z" fill="#4aa3bb" stroke="#4aa3bb" stroke-width="0.5" stroke-linejoin="round"/>
<path d="M765.68,448.84L772.65,449.51L772.69,447.93L765.72,447.26Z" fill="#117b93" stroke="#117b93" stroke-width="0.5" stroke-linejoin="round"/>
<path d="M765.72,447.26L772.69,447.93L776.8,439.34L769.95,438.69Z" fill="#2791a8" stroke="#2791a8" stroke-width="0.5" stroke-linejoin="round"/>
<path d="M772.65,449.51L776.76,440.9L776.8,439.34L772.69,447.93Z" fill="#04657f" stroke="#04657f" stroke-width="0.5" stroke-linejoin="round"/>
<path d="M772.65,449.51L779.63,450.19L779.63,450.19L772.65,449.51Z" fill="#5db7cf" stroke="#5db7cf" stroke-width="0.5" stroke-linejoin="round"/>
<path d="M772.65,449.51L779.63,450.19L783.63,441.55L776.76,440.9Z" fill="#77c9de" stroke="#77c9de" stroke-width="0.5" stroke-linejoin="round"/>
<path d="M779.63,450.19L783.63,441.55L783.63,441.55L779.63,450.19Z" fill="#4aa3bb" stroke="#4aa3bb" stroke-width="0.5" stroke-linejoin="round"/>
<path d="M787.85,450.99L794.88,451.67L794.93,449.9L787.9,449.23Z" fill="#117b93" stroke="#117b93" stroke-width="0.5" stroke-linejoin="round"/>
<path d="M787.9,449.23L794.93,449.9L798.68,441.24L791.77,440.59Z" fill="#2791a8" stroke="#2791a8" stroke-width="0.5" stroke-linejoin="round"/>
<path d="M794.88,451.67L798.62,442.98L798.68,441.24L794.93,449.9Z" fill="#04657f" stroke="#04657f" stroke-width="0.5" stroke-linejoin="round"/>
<path d="M794.88,451.67L801.92,452.35L801.92,452.34L794.88,451.66Z" fill="#5db7cf" stroke="#5db7cf" stroke-width="0.5" stroke-linejoin="round"/>
<path d="M794.88,451.66L801.92,452.34L805.55,443.63L798.62,442.97Z" fill="#77c9de" stroke="#77c9de" stroke-width="0.5" stroke-linejoin="round"/>
<path d="M801.92,452.35L805.55,443.64L805.55,443.63L801.92,452.34Z" fill="#4aa3bb" stroke="#4aa3bb" stroke-width="0.5" stroke-linejoin="round"/>
<path d="M810.22,453.16L817.31,453.84L817.52,447.64L810.43,446.96Z" fill="#117b93" stroke="#117b93" stroke-width="0.5" stroke-linejoin="round"/>
<path d="M810.43,446.96L817.52,447.64L820.89,438.97L813.91,438.31Z" fill="#2791a8" stroke="#2791a8" stroke-width="0.5" stroke-linejoin="round"/>
<path d="M817.31,453.84L820.67,445.07L820.89,438.97L817.52,447.64Z" fill="#04657f" stroke="#04657f" stroke-width="0.5" stroke-linejoin="round"/>
<path d="M817.31,453.84L824.42,454.53L824.42,454.48L817.31,453.79Z" fill="#5db7cf" stroke="#5db7cf" stroke-width="0.5" stroke-linejoin="round"/>
<path d="M817.31,453.79L824.42,454.48L827.66,445.68L820.68,445.02Z" fill="#77c9de" stroke="#77c9de" stroke-width="0.5" stroke-linejoin="round"/>
<path d="M824.42,454.53L827.66,445.74L827.66,445.68L824.42,454.48Z" fill="#4aa3bb" stroke="#4aa3bb" stroke-width="0.5" stroke-linejoin="round"/>
<path d="M832.79,455.34L839.94,456.03L840.81,433.89L833.62,433.22Z" fill="#117b93" stroke="#117b93" stroke-width="0.5" stroke-linejoin="round"/>
<path d="M833.62,433.22L840.81,433.89L843.79,425.39L836.72,424.75Z" fill="#2791a8" stroke="#2791a8" stroke-width="0.5" stroke-linejoin="round"/>
<path d="M839.94,456.03L842.92,447.19L843.79,425.39L840.81,433.89Z" fill="#04657f" stroke="#04657f" stroke-width="0.5" stroke-linejoin="round"/>
<path d="M839.94,456.03L847.11,456.73L847.13,456.38L839.95,455.69Z" fill="#5db7cf" stroke="#5db7cf" stroke-width="0.5" stroke-linejoin="round"/>
<path d="M839.95,455.69L847.13,456.38L849.98,447.52L842.93,446.85Z" fill="#77c9de" stroke="#77c9de" stroke-width="0.5" stroke-linejoin="round"/>
<path d="M847.11,456.73L849.97,447.86L849.98,447.52L847.13,456.38Z" fill="#4aa3bb" stroke="#4aa3bb" stroke-width="0.5" stroke-linejoin="round"/>
<path d="M855.56,457.55L862.77,458.25L863.03,452.53L855.8,451.84Z" fill="#117b93" stroke="#117b93" stroke-width="0.5" stroke-linejoin="round"/>
<path d="M855.8,451.84L863.03,452.53L865.61,443.7L858.51,443.03Z" fill="#2791a8" stroke="#2791a8" stroke-width="0.5" stroke-linejoin="round"/>
<path d="M862.77,458.25L865.36,449.32L865.61,443.7L863.03,452.53Z" fill="#04657f" stroke="#04657f" stroke-width="0.5" stroke-linejoin="round"/>
<path d="M862.77,458.25L870.01,458.95L870.02,458.72L862.78,458.02Z" fill="#5db7cf" stroke="#5db7cf" stroke-width="0.5" stroke-linejoin="round"/>
<path d="M862.78,458.02L870.02,458.72L872.48,449.77L865.37,449.1Z" fill="#77c9de" stroke="#77c9de" stroke-width="0.5" stroke-linejoin="round"/>
<path d="M870.01,458.95L872.47,450L872.48,449.77L870.02,458.72Z" fill="#4aa3bb" stroke="#4aa3bb" stroke-width="0.5" stroke-linejoin="round"/>
<path d="M878.53,459.77L885.81,460.48L886.08,455.1L878.79,454.4Z" fill="#117b93" stroke="#117b93" stroke-width="0.5" stroke-linejoin="round"/>
<path d="M878.79,454.4L886.08,455.1L888.26,446.18L881.1,445.51Z" fill="#2791a8" stroke="#2791a8" stroke-width="0.5" stroke-linejoin="round"/>
<path d="M885.81,460.48L888,451.48L888.26,446.18L886.08,455.1Z" fill="#04657f" stroke="#04657f" stroke-width="0.5" stroke-linejoin="round"/>
<path d="M885.81,460.48L893.11,461.19L893.12,461.13L885.82,460.42Z" fill="#5db7cf" stroke="#5db7cf" stroke-width="0.5" stroke-linejoin="round"/>
<path d="M885.82,460.42L893.12,461.13L895.17,452.1L888,451.42Z" fill="#77c9de" stroke="#77c9de" stroke-width="0.5" stroke-linejoin="round"/>
<path d="M893.11,461.19L895.17,452.16L895.17,452.1L893.12,461.13Z" fill="#4aa3bb" stroke="#4aa3bb" stroke-width="0.5" stroke-linejoin="round"/>
<path d="M901.72,462.02L909.06,462.73L909.16,460.93L901.81,460.22Z" fill="#117b93" stroke="#117b93" stroke-width="0.5" stroke-linejoin="round"/>
<path d="M901.81,460.22L909.16,460.93L910.93,451.88L903.71,451.19Z" fill="#2791a8" stroke="#2791a8" stroke-width="0.5" stroke-linejoin="round"/>
<path d="M909.06,462.73L910.84,453.65L910.93,451.88L909.16,460.93Z" fill="#04657f" stroke="#04657f" stroke-width="0.5" stroke-linejoin="round"/>
<path d="M909.06,462.73L916.43,463.45L916.43,463.43L909.06,462.72Z" fill="#5db7cf" stroke="#5db7cf" stroke-width="0.5" stroke-linejoin="round"/>
<path d="M909.06,462.72L916.43,463.43L918.07,454.32L910.84,453.63Z" fill="#77c9de" stroke="#77c9de" stroke-width="0.5" stroke-linejoin="round"/>
<path d="M916.43,463.45L918.07,454.34L918.07,454.32L916.43,463.43Z" fill="#4aa3bb" stroke="#4aa3bb" stroke-width="0.5" stroke-linejoin="round"/>
<text x="424.78" y="429.41" text-anchor="end" transform="rotate(-45 424.78 429.41)" class="xl">South Africa</text>
<text x="444.02" y="431.27" text-anchor="end" transform="rotate(-45 444.02 431.27)" class="xl">United Kingdom</text>
<text x="463.43" y="433.15" text-anchor="end" transform="rotate(-45 463.43 433.15)" class="xl">Belgium</text>
<text x="483" y="435.05" text-anchor="end" transform="rotate(-45 483 435.05)" class="xl">Canada</text>
<text x="502.73" y="436.97" text-anchor="end" transform="rotate(-45 502.73 436.97)" class="xl">Brazil</text>
<text x="522.63" y="438.9" text-anchor="end" transform="rotate(-45 522.63 438.9)" class="xl">United States</text>
<text x="542.7" y="440.84" text-anchor="end" transform="rotate(-45 542.7 440.84)" class="xl">France</text>
<text x="562.93" y="442.8" text-anchor="end" transform="rotate(-45 562.93 442.8)" class="xl">Turkey</text>
<text x="583.34" y="444.78" text-anchor="end" transform="rotate(-45 583.34 444.78)" class="xl">Greece</text>
<text x="603.92" y="446.78" text-anchor="end" transform="rotate(-45 603.92 446.78)" class="xl">India</text>
<text x="624.67" y="448.79" text-anchor="end" transform="rotate(-45 624.67 448.79)" class="xl">Germany</text>
<text x="645.61" y="450.82" text-anchor="end" transform="rotate(-45 645.61 450.82)" class="xl">Russia</text>
<text x="666.72" y="452.87" text-anchor="end" transform="rotate(-45 666.72 452.87)" class="xl">Japan</text>
<text x="688.02" y="454.93" text-anchor="end" transform="rotate(-45 688.02 454.93)" class="xl">China</text>
<text x="709.5" y="457.02" text-anchor="end" transform="rotate(-45 709.5 457.02)" class="xl">Egypt</text>
<text x="731.17" y="459.12" text-anchor="end" transform="rotate(-45 731.17 459.12)" class="xl">Spain</text>
<text x="753.04" y="461.24" text-anchor="end" transform="rotate(-45 753.04 461.24)" class="xl">Italy</text>
<text x="775.09" y="463.38" text-anchor="end" transform="rotate(-45 775.09 463.38)" class="xl">Hong Kong</text>
<text x="797.34" y="465.53" text-anchor="end" transform="rotate(-45 797.34 465.53)" class="xl">Switzerland</text>
<text x="819.79" y="467.71" text-anchor="end" transform="rotate(-45 819.79 467.71)" class="xl">Poland</text>
<text x="842.43" y="469.91" text-anchor="end" transform="rotate(-45 842.43 469.91)" class="xl">Mexico</text>
<text x="865.28" y="472.12" text-anchor="end" transform="rotate(-45 865.28 472.12)" class="xl">Peru</text>
<text x="888.34" y="474.36" text-anchor="end" transform="rotate(-45 888.34 474.36)" class="xl">Malaysia</text>
<text x="911.61" y="476.61" text-anchor="end" transform="rotate(-45 911.61 476.61)" class="xl">Austria</text>
<rect x="548" y="532" width="16" height="12" fill="#117b93"/>
<text x="569" y="543" font-size="11.5" font-weight="bold" fill="#4f5964">Population</text>
<rect x="648.3" y="532" width="16" height="12" fill="#5db5cc"/>
<text x="670" y="543" font-size="11.5" font-weight="bold" fill="#4f5964">Area</text>
</svg>
</body></html>
